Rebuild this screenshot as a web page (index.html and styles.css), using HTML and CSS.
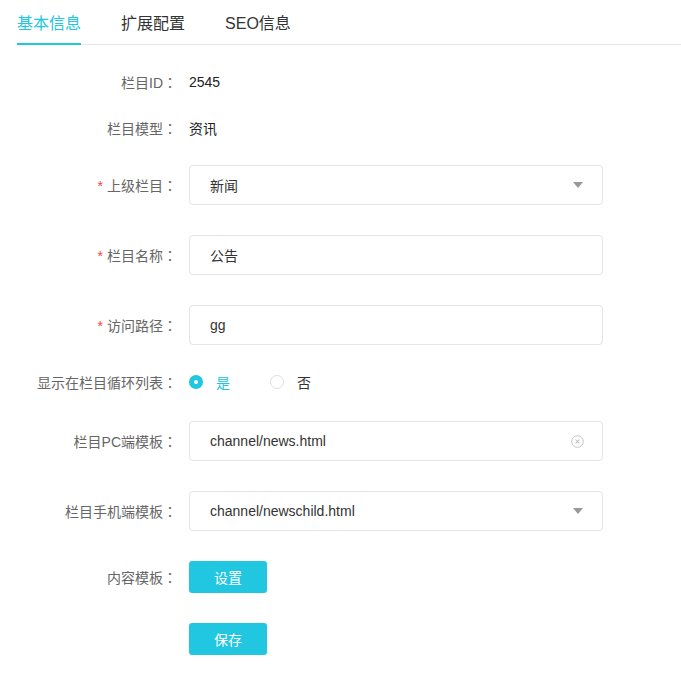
FILE: index.html
```html
<!DOCTYPE html>
<html lang="zh-CN">
<head>
    <meta charset="UTF-8">
    <meta name="viewport" content="width=device-width, initial-scale=1.0">
    <title>栏目编辑</title>
    <link rel="stylesheet" href="styles.css">
</head>
<body>
<div class="page">
    <div class="tabs">
        <div class="tab active">基本信息</div>
        <div class="tab">扩展配置</div>
        <div class="tab">SEO信息</div>
    </div>

    <div class="form">
        <div class="item item-tight">
            <label class="label">栏目ID</label>
            <div class="value">2545</div>
        </div>
        <div class="item item-mid">
            <label class="label">栏目模型</label>
            <div class="value">资讯</div>
        </div>
        <div class="item">
            <label class="label required">上级栏目</label>
            <div class="input select">
                <span>新闻</span>
                <i class="caret"></i>
            </div>
        </div>
        <div class="item">
            <label class="label required">栏目名称</label>
            <div class="input"><span>公告</span></div>
        </div>
        <div class="item item-mid">
            <label class="label required">访问路径</label>
            <div class="input"><span>gg</span></div>
        </div>
        <div class="item item-radio">
            <label class="label">显示在栏目循环列表</label>
            <div class="radios">
                <span class="radio checked"><i class="dot"></i>是</span>
                <span class="radio"><i class="dot"></i>否</span>
            </div>
        </div>
        <div class="item">
            <label class="label">栏目PC端模板</label>
            <div class="input">
                <span>channel/news.html</span>
                <svg class="clear" width="13" height="13" viewBox="0 0 13 13">
                    <circle cx="6.5" cy="6.5" r="5.8" fill="none" stroke="#c0c4cc" stroke-width="1"/>
                    <path d="M4.6 4.6 L8.4 8.4 M8.4 4.6 L4.6 8.4" stroke="#c0c4cc" stroke-width="1.1"/>
                </svg>
            </div>
        </div>
        <div class="item">
            <label class="label">栏目手机端模板</label>
            <div class="input select">
                <span>channel/newschild.html</span>
                <i class="caret"></i>
            </div>
        </div>
        <div class="item item-btn">
            <label class="label">内容模板</label>
            <button class="btn">设置</button>
        </div>
        <div class="item item-btn">
            <label class="label empty"></label>
            <button class="btn">保存</button>
        </div>
    </div>
</div>
</body>
</html>
```

FILE: styles.css
```css
body {
    margin: 0;
    background: #fff;
    font-family: "Liberation Sans", "Noto Sans CJK SC", sans-serif;
    font-size: 14px;
    color: #333;
}
.page {
    padding-left: 17px;
}
.tabs {
    display: flex;
    gap: 40px;
    padding-top: 5px;
    border-bottom: 1px solid #e4e7ed;
}
.tab {
    box-sizing: border-box;
    height: 40px;
    line-height: 38px;
    font-size: 16px;
    color: #333;
    border-bottom: 2px solid transparent;
    margin-bottom: -1px;
}
.tab.active {
    color: #21c6e0;
    border-bottom-color: #21c6e0;
}
.form {
    padding-top: 17px;
}
.item {
    display: flex;
    align-items: center;
    height: 40px;
    margin-bottom: 30px;
}
.item-tight {
    margin-bottom: 6px;
}
.item-mid {
    margin-bottom: 17px;
}
.item-radio {
    margin-bottom: 19px;
}
.item-btn {
    height: 32px;
}
.label {
    width: 172px;
    flex-shrink: 0;
    box-sizing: border-box;
    padding-right: 12px;
    text-align: right;
    color: #666;
}
/* 冒号居中显示 */
.label::after {
    content: "：";
    font-family: "Noto Sans CJK TC", sans-serif;
    font-feature-settings: "locl" 0;
}
.label.empty::after {
    content: "";
}
.label.required::before {
    content: "*";
    color: #f5463c;
    margin-right: 4px;
}
.value {
    color: #222;
}
.input {
    box-sizing: border-box;
    width: 414px;
    height: 40px;
    border: 1px solid #e2e4e8;
    border-radius: 4px;
    padding: 0 18px 0 20px;
    display: flex;
    align-items: center;
    justify-content: space-between;
    color: #333;
}
.caret {
    width: 0;
    height: 0;
    border-left: 5px solid transparent;
    border-right: 5px solid transparent;
    border-top: 6px solid #999;
    margin-right: 1px;
}
.clear {
    display: block;
}
.radios {
    display: flex;
    gap: 40px;
}
.radio {
    display: flex;
    align-items: center;
    color: #333;
}
.radio .dot {
    box-sizing: border-box;
    width: 14px;
    height: 14px;
    border-radius: 50%;
    border: 1px solid #dcdfe6;
    margin-right: 13px;
    background: #fff;
}
.radio.checked {
    color: #21c6e0;
}
.radio.checked .dot {
    border: 5px solid #21c6e0;
    background: #fff;
}
.btn {
    width: 78px;
    height: 32px;
    border: none;
    border-radius: 3px;
    background: #21c6e0;
    color: #fff;
    font-family: inherit;
    font-size: 14px;
    padding: 0;
    cursor: pointer;
}
```
